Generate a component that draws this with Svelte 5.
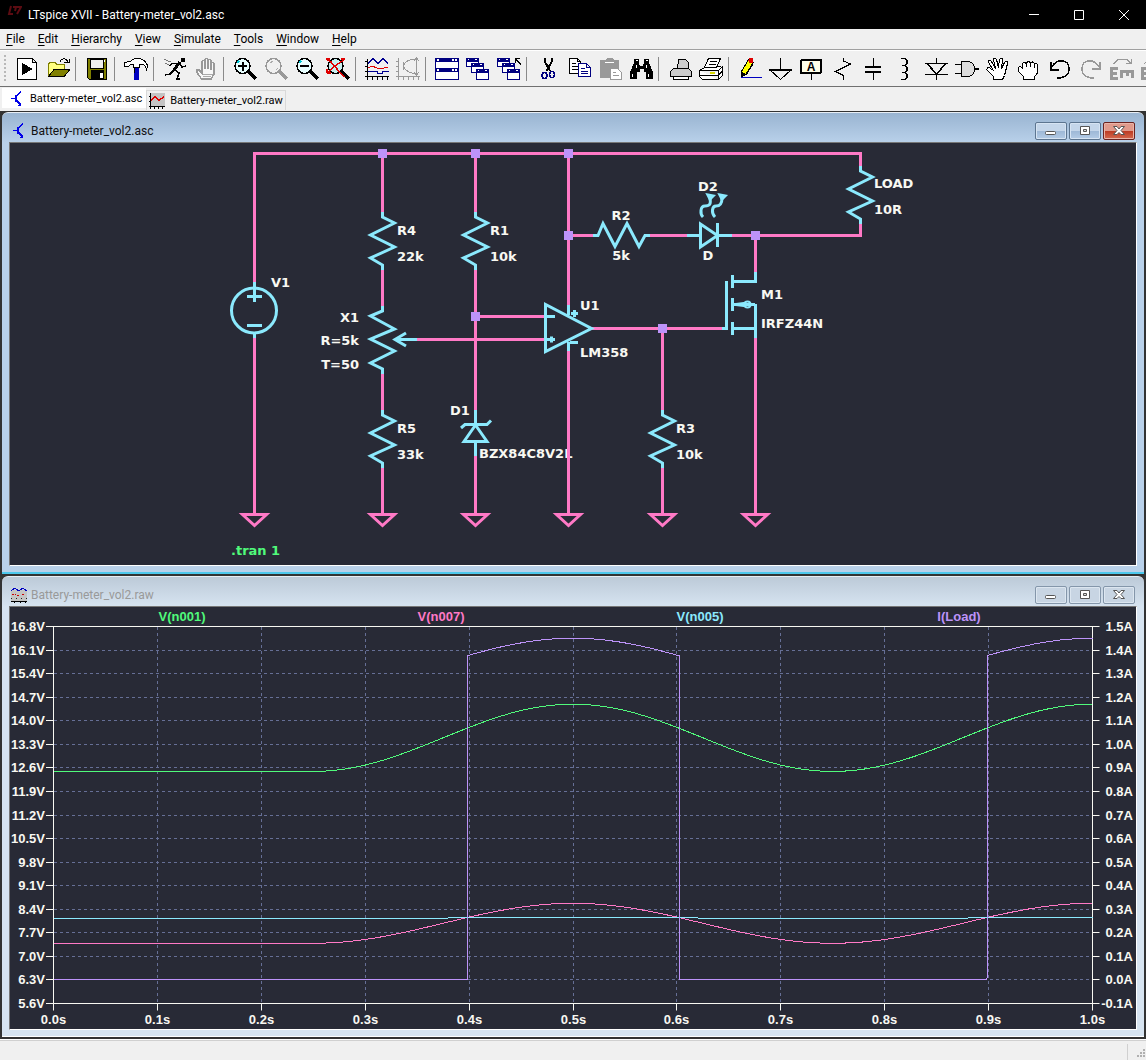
<script>
  const menus = ['File', 'Edit', 'Hierarchy', 'View', 'Simulate', 'Tools', 'Window', 'Help'];

  const toolGroups = [
    ['Run', 'Open'],
    ['Save'],
    ['Control Panel'],
    ['Simulate', 'Halt'],
    ['Zoom in', 'Pan', 'Zoom out', 'Zoom full'],
    ['Autorange', 'FFT'],
    ['Tile', 'Cascade', 'Close all'],
    ['Cut', 'Copy', 'Paste', 'Find'],
    ['Print setup', 'Print'],
    ['Wire', 'Ground', 'Label net', 'Resistor', 'Capacitor', 'Inductor', 'Diode', 'Component', 'Move', 'Drag', 'Undo', 'Redo', 'Rotate', 'Mirror']
  ];

  const resistors = [[382.5, 212], [475.5, 212], [382.5, 410], [662.5, 410], [860.5, 166]];
  const grounds = [254.5, 382.5, 475.5, 568.5, 662.5, 755.5];
  const nodes = [[382.5, 153.5], [475.5, 153.5], [568.5, 153.5], [568.5, 235.5], [755.5, 235.5], [475.5, 316.5], [662.5, 328.5]];
  const labels = [
    ['V1', 271, 287], ['R4', 397, 235], ['22k', 397, 261], ['R1', 490, 235], ['10k', 490, 261],
    ['R5', 397, 433], ['33k', 397, 459], ['D1', 450, 415], ['BZX84C8V2L', 479, 458],
    ['U1', 580, 310], ['LM358', 580, 357], ['M1', 761, 299], ['IRFZ44N', 761, 328],
    ['R3', 676, 433], ['10k', 676, 459], ['LOAD', 874, 188], ['10R', 874, 214],
    ['X1', 359, 322, 'end'], ['R=5k', 359, 345, 'end'], ['T=50', 359, 369, 'end'],
    ['R2', 621, 220, 'middle'], ['5k', 621, 260, 'middle'], ['D2', 708, 191, 'middle'], ['D', 708, 260, 'middle']
  ];

  const left = 53.5, right = 1092.5, top = 626.5, bottom = 1003.5;
  const rowY = (i) => Math.floor(top + (i * (bottom - top)) / 16) + 0.5;
  const colX = (t) => left + t * (right - left);
  const rows = Array.from({ length: 17 }, (_, i) => ({
    y: rowY(i),
    volts: (16.8 - 0.7 * i).toFixed(1) + 'V',
    amps: ((15 - i) / 10).toFixed(1) + 'A'
  }));
  const cols = Array.from({ length: 11 }, (_, i) => ({ x: Math.floor(colX(i / 10)) + 0.5, label: (i / 10).toFixed(1) + 's' }));

  function wave(mid, amp, from = 0, to = 1) {
    const pts = [];
    for (let i = 0; i <= 100; i++) {
      const t = from + ((to - from) * i) / 100;
      const c = t < 0.25 ? 1 : Math.cos((t - 0.25) * 4 * Math.PI);
      pts.push(colX(t).toFixed(1) + ',' + (mid + amp * c).toFixed(1));
    }
    return pts.join(' ');
  }
  const traces = [
    { name: 'V(n001)', x: 182, tone: 'green', points: wave(737.8, 33.7) },
    { name: 'V(n007)', x: 441, tone: 'pink', points: wave(923.3, 20) },
    { name: 'V(n005)', x: 700, tone: 'cyan', points: wave(918, 0.5) },
    {
      name: 'I(Load)', x: 959, tone: 'purple',
      points: `53.5,979.5 467.5,979.5 467.5,655.5 ${wave(662.8, 24.6, 0.4, 0.602)} 679.5,655.5 679.5,979.5 986.5,979.5 987.5,976 987.5,655.5 ${wave(662.8, 24.6, 0.9, 1)}`
    }
  ];
</script>

{#snippet transistor()}
  <svg class="small" viewBox="0 0 16 16" aria-hidden="true">
    <path d="M2 7.500h5M7 4v7M7 5.500L12 1M7 9l5 5" fill="none" stroke="#0000e8" stroke-width="1.500" />
    <path d="M12 11v4H8z" fill="#0000e8" />
  </svg>
{/snippet}

{#snippet glass(color, fill)}
  <path d="M15 14L23 22" stroke={color} stroke-width="3" />
  <circle cx="9.500" cy="9" r="7.500" fill={fill} stroke={color} stroke-width="1.500" />
{/snippet}

{#snippet windows()}
  <g fill="#fff" stroke="#000080">
    <path d="M.5 1.500h12v8H.5z" />
    <path d="M1 3h11" stroke-width="4" />
    <path d="M5.500 6.500h12v9h-12z" />
    <path d="M6 8h11" stroke-width="4" />
    <path d="M10.500 12.500h12v10h-12z" />
    <path d="M11 14h11" stroke-width="4" />
  </g>
  <path d="M2 2.500h1M9 2.500h2M7 7.500h1M14 7.500h2M12 13.500h1M19 13.500h2" stroke="#fff" />
{/snippet}

{#snippet icon(name)}
  <svg class="icon" viewBox="0 0 24 24" fill="none" stroke="#000" aria-hidden="true">
    {#if name === 'Run'}
      <path d="M2.500 1.500h15l4 4v17h-19zM17.500 1.500v4h4" fill="#fff" />
      <path d="M7 6v12l11-6z" fill="#000" stroke="none" />
    {:else if name === 'Open'}
      <path d="M2.500 19.500V7l2-2h4l2 2h8v6" fill="#ffff80" stroke="#808000" />
      <path d="M2.500 19.500L8 12.500h16l-6 7z" fill="#808000" />
      <path d="M14 4.500c2-4 6-4 8 1M18 5.500h5v-4" />
    {:else if name === 'Save'}
      <path d="M2.500 1.500h19v21h-17l-2-2z" fill="#808000" />
      <path d="M5.500 2h13v9h-13z" fill="#f0f0f0" />
      <path d="M6 13h13v9H6z" fill="#000" stroke="none" />
      <path d="M15 16h3v5h-3zM19 3h1v2h-1z" fill="#fff" stroke="none" />
    {:else if name === 'Control Panel'}
      <path d="M10 10h5v13h-5z" fill="#0000c0" stroke="none" />
      <path d="M10.500 10v6" />
      <path d="M.5 5.500v4h4l2-2h3v3h6v-3c4-1 6 1 7 5c2-4 0-8-4-10c-3-1.500-7-1.500-10 0l-2 2z" fill="#fff" />
    {:else if name === 'Simulate'}
      <path d="M18 1h4v4h-4z" fill="#000" stroke="none" />
      <path d="M17 5l-6 8" stroke-width="3" />
      <path d="M17 7l2 3 4-1M15 6.500H9L7 9M12 13l4 3-2 6h3M11 13l-4 4-5 1" stroke-width="1.500" />
      <path d="M1 2l4 2 3 0M2 6l4 2" stroke="#777" />
    {:else if name === 'Halt'}
      <path d="M7.500 22L3 15.500V13h2l3 3V5c0-2 3-2 3 0v7V3c0-2 3-2 3 0v9V4c0-2 3-2 3 0v9V7c0-2 3-2 3 0v10l-3 5z" fill="#f8f8f8" stroke="#999" stroke-width="1.500" />
      <path d="M9 17h10M9 19h8" stroke="#aaa" />
    {:else if name === 'Zoom in'}
      {@render glass('#000', '#e8ffff')}
      <path d="M5 9h9M9.500 4.500v9" stroke-width="2" />
      <path d="M4 6l2-2" stroke="#00c8d8" stroke-width="2" />
    {:else if name === 'Pan'}
      {@render glass('#999', '#f0f0f0')}
      <path d="M6 6l3-2M12 13l2-2" stroke="#aaa" />
    {:else if name === 'Zoom out'}
      {@render glass('#000', '#e8ffff')}
      <path d="M5 9h9" stroke-width="2" />
      <path d="M4 6l2-2" stroke="#00c8d8" stroke-width="2" />
    {:else if name === 'Zoom full'}
      {@render glass('#000', '#c8f0f0')}
      <path d="M0 2l5 3 13 15M19 2L9 9 1 16M1 16v-4M1 16h4M0 2h4M19 2l-4 0" stroke="#e00000" stroke-width="1.500" />
    {:else if name === 'Autorange'}
      <path d="M2.500 2v21M0 19.500h24M0 4.500h2M0 9.500h2M0 14.500h2M7.500 20v3M12.500 20v3M17.500 20v3M22.500 20v3" />
      <path d="M3 6.500l5-5 5 5 5-5 5 5M3 14.500h9v2h5v-2h7" stroke="#000090" />
      <path d="M3 11l4-2 6 2.500h4l6-1.500" stroke="#e00000" />
    {:else if name === 'FFT'}
      <path d="M2.500 1v22M0 19.500h24M0 4.500h2M0 9.500h2M0 14.500h2M7.500 20v3M12.500 20v3M17.500 20v3M22.500 20v3M7 9c3-6 7-6.500 13-6.500M7 9c3 6 7 7.500 13 7.500M20.500 1v18M7.500 5v8M18 4l2.500-3 2.500 3M18 15l2.500 3 2.500-3" stroke="#999" />
    {:else if name === 'Tile'}
      <path d="M.5 1.500h23v21H.5z" fill="#fff" stroke="#000080" />
      <path d="M0 3h24M0 13h24" stroke="#000080" stroke-width="4" />
      <path d="M2 3h2M17 3h2M20 3h2M2 13h2M17 13h2M20 13h2" stroke="#fff" stroke-width="2" />
    {:else if name === 'Cascade'}
      {@render windows()}
    {:else if name === 'Close all'}
      {@render windows()}
      <path d="M18.500 6V1.500H23M18.500 1.500l5.500 6" stroke-width="1.500" />
    {:else if name === 'Cut'}
      <path d="M9 1v4l5 9M15.500 1v4l-5 9" stroke-width="2" />
      <ellipse cx="8.500" cy="18.500" rx="2.500" ry="3" stroke="#000080" stroke-width="1.500" />
      <ellipse cx="16" cy="17.500" rx="2.500" ry="3" stroke="#000080" stroke-width="1.500" />
    {:else if name === 'Copy'}
      <path d="M2.500 1.500h8l3 3v12h-11zM10.500 1.500v3h3M5 6.500h4M5 9.500h6M5 12.500h6" fill="#fff" />
      <path d="M11.500 6.500h8l4 4v9h-12zM19.500 6.500v4h4M14 11.500h4M14 14.500h7M14 16.500h7" fill="#fff" stroke="#000080" />
    {:else if name === 'Paste'}
      <path d="M2 3h5l2-2h5l2 2h5v18H2z" fill="#999" stroke="none" />
      <path d="M7 5.500h9" stroke="#fff" />
      <path d="M12.500 11.500h7l4 4v7h-11zM15 15.500h3M15 18.500h6" fill="#fff" stroke="#999" />
    {:else if name === 'Find'}
      <path d="M5 2h5v4l1 3h3l1-3V2h5v4l4 9v7h-7v-7h-2v-3h-4v3H8v7H1v-7l4-9z" fill="#000" stroke="none" />
      <path d="M7 3.500h2M17 3.500h2M7.500 8v3M17.500 8v3M3.500 17v3M19.500 17v3" stroke="#fff" />
    {:else if name === 'Print setup'}
      <path d="M10.500 2.500h7l3 3v7h-11z" fill="#ccc" />
      <path d="M5.500 11.500h15l3 3v5h-21v-5z" fill="#ccc" />
      <path d="M5.500 19.500v3h15v-3z" fill="#fff" />
    {:else if name === 'Print'}
      <path d="M5.500 10.500L.5 13.500v6l3 3h16l4-4v-8l-3-1zM.5 13.500h19v9M19.500 13.500l4-4M1 18.500h18l4-4" fill="#fff" />
      <path d="M9.500 1.500h12l-4 9h-12zM11 4.500h7M10 7.500h7" fill="#fff" />
      <path d="M11 16h5" stroke="#d8d800" stroke-width="2" />
    {:else if name === 'Wire'}
      <path d="M3 20.500h21" stroke="#0000c0" />
      <path d="M3.500 19.500v-5l7-12 5 3-7 12z" fill="#ffff00" />
      <path d="M3 20v-5l4 2z" fill="#000" />
      <circle cx="13" cy="3.500" r="2.500" fill="#e00000" stroke="none" />
      <path d="M8 17.500l7-11" stroke-width="1.500" />
    {:else if name === 'Ground'}
      <path d="M11.500 1v11M.5 12.500h22L11.500 22.500z" />
      <path d="M0 13h23" stroke-width="2" />
    {:else if name === 'Label net'}
      <rect x="1" y="3" width="20" height="13" rx="1" fill="#ffffe8" stroke-width="2" />
      <text class="glyph" x="11" y="14" text-anchor="middle">A</text>
      <path d="M11.500 16v7" />
    {:else if name === 'Resistor'}
      <path d="M12.500 1v3l7 3-15 7.500 8 4v4.500" />
    {:else if name === 'Capacitor'}
      <path d="M11.500 1v9M11.500 15v8" />
      <path d="M3 10h16M3 15h16" stroke-width="2" />
    {:else if name === 'Inductor'}
      <path d="M8 1.500h3c4 0 4 7 0 7H9h2c4 0 4 7 0 7H9h2c4 0 4 7 0 7H8" stroke-width="1.500" />
    {:else if name === 'Diode'}
      <path d="M12.500 1v5M12.500 17v6M1 6.500h23M3 6.500l9.500 10.500L22 6.500M1 17.500h23" stroke-width="1.500" />
    {:else if name === 'Component'}
      <path d="M6 4.500h7c9 1 9 14 0 15H6z" fill="#ddd" />
      <path d="M0 7.500h6M0 16.500h6M20 12h4" stroke-width="1.500" />
    {:else if name === 'Move'}
      <path d="M7.500 22.500v-3l-6-6c-2-2 1-4 3-2l3 2-5-8c-1-3 2-3 3-1l4 7-2-9c0-2 2-2 3 0l2 8 1-8c1-2 3-2 3 0l-1 9 3-6c1-2 4-1 3 1l-3 12-2 4z" fill="#fff" />
    {:else if name === 'Drag'}
      <path d="M6.500 22.500v-3l-5-5v-4c1-2 3-1 4 1V7c1-2 3-2 4 0c0-3 3-3 4-1c1-2 3-1 4 1c2-1 3 0 3 2v7l-3 4v2.500z" fill="#fff" />
      <path d="M9.500 6v4M13.500 6v4M17.500 7v4" />
    {:else if name === 'Undo'}
      <path d="M4 10c4-8 17-9 17 2c0 7-6 9-12 9M3 5v8h8" stroke-width="1.500" />
    {:else if name === 'Redo'}
      <path d="M20 10C16 2 3 1 3 12c0 7 6 9 12 9M21 5v7h-8" stroke="#999" stroke-width="1.500" />
    {:else if name === 'Rotate'}
      <path d="M3.500 7l5-5h8l4 4M16 6.500h5V2" stroke="#999" />
      <path d="M8 11.500H1.500v10H8M2 16.500h5M10 14.500h14M11.500 15v6M17 15v4M22.500 15v6" stroke="#999" stroke-width="3" />
    {:else if name === 'Mirror'}
      <path d="M3 7l5-5" stroke="#999" />
      <path d="M8 11.500H1.500v10H8M2 16.500h5" stroke="#999" stroke-width="3" />
    {/if}
  </svg>
{/snippet}

{#snippet frameButtons()}
  <div class="frame-buttons">
    <button aria-label="Minimize"><svg viewBox="0 0 14 12"><rect x="1.500" y="6.500" width="10" height="3" rx="1" fill="#fff" stroke="#555" /></svg></button>
    <button aria-label="Restore"><svg viewBox="0 0 14 12"><path d="M2.500 1.500h9v8h-9z" fill="#fff" stroke="#555" /><path d="M5.500 4.500h3v2h-3z" fill="#ddd" stroke="#555" /></svg></button>
    <button class="close" aria-label="Close"><svg viewBox="0 0 14 12"><path d="M1.500 1.500h3.500l2 2.500 2-2.500h3.500L9 5.500l3.500 4H9L7 7.500 5 9.500H1.500L5 5.500z" fill="#fff" stroke="#555" /></svg></button>
  </div>
{/snippet}

<div class="app">
  <header class="titlebar">
    <svg class="logo" viewBox="0 0 16 16" aria-hidden="true"><path d="M5 3L3 11h4M7 4h8l-4 7M10 4L9 8" fill="none" stroke="#5c0c12" stroke-width="2" /></svg>
    <h1>LTspice XVII - Battery-meter_vol2.asc</h1>
    <div class="system">
      <button aria-label="Minimize"><svg viewBox="0 0 12 12"><path d="M1 5.500h10" /></svg></button>
      <button aria-label="Maximize"><svg viewBox="0 0 12 12"><path d="M1.500 1.500h9v9h-9z" /></svg></button>
      <button aria-label="Close"><svg viewBox="0 0 12 12"><path d="M1 1l10 10M11 1L1 11" /></svg></button>
    </div>
  </header>

  <nav class="menu">
    {#each menus as item}
      <button><u>{item[0]}</u>{item.slice(1)}</button>
    {/each}
  </nav>

  <div class="toolbar" role="toolbar" aria-label="Main">
    <span class="grip"></span>
    {#each toolGroups as group}
      <div class="group">
        {#each group as name}
          <button aria-label={name}>{@render icon(name)}</button>
        {/each}
      </div>
    {/each}
  </div>

  <div class="tabs" role="tablist">
    <button class="tab active" role="tab" aria-selected="true">{@render transistor()}Battery-meter_vol2.asc</button>
    <button class="tab" role="tab" aria-selected="false">
      <svg class="small" viewBox="0 0 16 16" aria-hidden="true">
        <path d="M1 0h15v14H1z" fill="#c4c4c4" />
        <path d="M1.500 0v16M0 13.500h16M0 3.500h2M0 8.500h2M5.500 14v2M9.500 14v2M13.500 14v2" stroke="#000" fill="none" />
        <path d="M2 7l4-3 4 3 5-3" stroke="#e00000" stroke-width="1.500" fill="none" />
      </svg>Battery-meter_vol2.raw</button>
  </div>

  <main class="desktop">
    <section class="child front">
      <div class="caption">{@render transistor()}<h2>Battery-meter_vol2.asc</h2>{@render frameButtons()}</div>
      <svg class="client" viewBox="10 143 1126 422" role="img" aria-label="Schematic">
        <g class="names">
          {#each labels as [text, x, y, anchor]}
            <text {x} {y} text-anchor={anchor ?? 'start'}>{text}</text>
          {/each}
          <text class="directive" x="231" y="555">.tran 1</text>
        </g>
        <g class="wires">
          <path d="M254.500 282V153.500H860.500V166M860.500 223V235.500H732M687 235.500H650M593 235.500H568.500" />
          <path d="M254.500 338V514M382.500 153V212M382.500 270V306M382.500 374V410M382.500 468V514" />
          <path d="M475.500 153V212M475.500 270V410M475.500 456V514M475.500 316.500H546M417 339.500H546" />
          <path d="M568.500 153V305M568.500 350V514M592 328.500H722M662.500 328V410M662.500 468V514" />
          <path d="M755.500 235V272M755.500 338V514" />
          {#each grounds as x}
            <path d="M{x - 12} 514.500h24l-12 11z" />
          {/each}
        </g>
        <g class="parts">
          {#each resistors as [x, y]}
            <path d="M{x} {y}v5l12 6-24 12 24 12-24 11 12 7v5" />
          {/each}
          <path d="M382.500 306v5l-12 5 24 13-24 10 24 12-24 12 12 6v5" />
          <path d="M417 339.500H395M406 333l-11 6.500 11 6.500" />
          <path d="M593 235.500h5l5-12 12 23 12-23 12 23 6-11h5" />
          <circle cx="254" cy="310.500" r="22.500" />
          <path d="M254.500 282v20M247 296.500h15M247 325.500h15M254.500 333v5" />
          <path d="M475.500 410v14M461 428l4-3.500h22l4-4M475.500 425l-11.500 16.500h23zM475.500 441v15" />
          <path d="M545.500 304.500v47l46-23zM568.500 305v10M568.500 342v9M547 316.500h8M547 339.500h8M551.500 336.500v6M571 313.500h7M574.500 310v7M570 342.500h8" />
          <path d="M687 235.500h13M700.500 224v23l17-11.500zM717.500 223v24M717 235.500h15" />
          <path d="M703 217c-3-3-3-11 2-11s6-2 5-8M715 217c-4-4-3-11 1-11s6-2 6-8" />
          <path class="solid" d="M708 195l5 1-3 3zM720 195l5 1-3 3z" />
          <path d="M722 328.500h4.500V281M755.500 272v9.500H732M732.500 275v13M732.500 298v13M732.500 322v13M732 328.500h23M755.500 304V338" />
          <path d="M733 304.500h22M736 304.500l8-1v2z" />
          <ellipse class="thin" cx="747.500" cy="304.500" rx="3" ry="3" />
        </g>
        <g class="nodes">
          {#each nodes as [x, y]}
            <rect x={x - 4.5} y={y - 4.5} width="9" height="9" />
          {/each}
        </g>
      </svg>
    </section>

    <section class="child">
      <div class="caption">
        <svg class="small" viewBox="0 0 16 16" aria-hidden="true">
          <path d="M0 3h16v11H0z" fill="#c4c4c4" />
          <path d="M0 4l4-3 4 3 4-3 4 3" stroke="#0000c0" fill="none" />
          <path d="M1 7.500h4M6 8.500h3M11 7.500h2" stroke="#c00" stroke-dasharray="2 1" />
          <path d="M0 11.500h16" stroke="#222" stroke-dasharray="1 4" /><path d="M0 14.500h16M3 15v1M9 15v1M14 15v1" stroke="#000" />
        </svg><h2>Battery-meter_vol2.raw</h2>{@render frameButtons()}
      </div>
      <svg class="client plot" viewBox="10 607 1126 422" role="img" aria-label="Waveforms">
        <g class="grid">
          {#each rows.slice(1, -1) as row}
            <path d="M{left} {row.y}H{right}" />
          {/each}
          {#each cols.slice(1, -1) as col}
            <path d="M{col.x} {top}V{bottom}" />
          {/each}
        </g>
        <g class="axes">
          <rect x={left} y={top} width={right - left} height={bottom - top} />
          {#each rows as row}
            <path d="M46 {row.y}H{left}M{right} {row.y}h7" />
          {/each}
          {#each cols as col}
            <path d="M{col.x} {bottom}v7" />
          {/each}
        </g>
        <g class="scale">
          {#each rows as row}
            <text x="45" y={row.y + 4.5} text-anchor="end">{row.volts}</text>
            <text x="1133" y={row.y + 4.5} text-anchor="end">{row.amps}</text>
          {/each}
          {#each cols as col}
            <text x={col.x} y="1024" text-anchor="middle">{col.label}</text>
          {/each}
        </g>
        {#each traces as trace}
          <g class={trace.tone}>
            <polyline points={trace.points} />
            <text x={trace.x} y="621" text-anchor="middle">{trace.name}</text>
          </g>
        {/each}
      </svg>
    </section>
  </main>

  <footer class="status">
    <span class="cell"></span>
    <svg class="sizer" viewBox="0 0 12 12" aria-hidden="true"><path d="M9 1h2v2H9zM6 4h2v2H6zM9 4h2v2H9zM3 7h2v2H3zM6 7h2v2H6zM9 7h2v2H9z" fill="#b0b0b0" /></svg>
  </footer>
</div>

<style>
  :global(body) {
    background: #f0f0f0;
  }
  .app {
    display: flex;
    flex-direction: column;
    min-height: 100vh;
    overflow: hidden;
    font: 12px/16px Roboto, 'Open Sans', sans-serif;
    color: #000;
  }
  button {
    font: inherit;
    color: inherit;
    background: none;
    border: 0;
    padding: 0;
    margin: 0;
  }
  h1,
  h2 {
    margin: 0;
    font: inherit;
    white-space: nowrap;
  }
  svg {
    display: block;
    flex: none;
  }
  .titlebar {
    display: flex;
    align-items: center;
    height: 29px;
    background: #000;
    color: #fff;
  }
  .logo {
    width: 16px;
    height: 16px;
    margin: 0 6px 8px;
  }
  .system {
    display: flex;
    margin-left: auto;
  }
  .system button {
    display: flex;
    align-items: center;
    justify-content: center;
    width: 45px;
    height: 26px;
  }
  .system svg {
    width: 12px;
    height: 12px;
    fill: none;
    stroke: #fff;
  }
  .menu {
    display: flex;
    height: 20px;
    background: #f0f0f0;
    border-bottom: 1px solid #a0a0a0;
  }
  .menu button {
    padding: 0 7px 0 6px;
  }
  .menu u {
    text-underline-offset: 2px;
  }
  .toolbar {
    display: flex;
    align-items: center;
    height: 35px;
    border-top: 1px solid #fff;
    border-bottom: 1px solid #707070;
    overflow: hidden;
  }
  .grip {
    flex: none;
    height: 27px;
    width: 2px;
    margin: 0 5px 0 4px;
    background: repeating-linear-gradient(#b8b8b8 0 2px, #f0f0f0 2px 4px);
  }
  .group {
    display: flex;
    flex: none;
  }
  .group + .group {
    margin-left: 2px;
    padding-left: 5px;
    border-left: 1px solid #8a8a8a;
  }
  .group button {
    flex: none;
    padding: 0 3px 0 4px;
  }
  .icon {
    width: 24px;
    height: 24px;
    shape-rendering: crispEdges;
  }
  .glyph {
    font: bold 12px 'Liberation Sans', sans-serif;
    fill: #000;
    stroke: none;
  }
  .tabs {
    display: flex;
    align-items: flex-start;
    height: 23px;
    padding: 1px 2px 0;
    font-size: 11px;
  }
  .tab {
    display: flex;
    align-items: center;
    gap: 5px;
    height: 20px;
    margin-top: 2px;
    padding: 0 2px;
    border: 1px solid #d9d9d9;
    border-bottom: 0;
    white-space: nowrap;
  }
  .tab.active {
    margin-top: 0;
    padding: 0 3px 0 6px;
    background: #fff;
    border-color: #fff;
  }
  .small {
    width: 16px;
    height: 16px;
    shape-rendering: crispEdges;
  }
  .desktop {
    display: flex;
    flex-direction: column;
    gap: 2px;
    padding: 1px 2px 2px;
    background: #333;
  }
  .child {
    padding: 0 7px 6px;
    background: linear-gradient(#bccad8, #d7e4f1 30px);
    border-top: 1px solid #e8eef5;
    border-bottom: 1px solid #fff;
    border-radius: 6px 6px 0 0;
  }
  .front {
    background: linear-gradient(#99b4d1, #b9d1ea 30px);
    border-bottom: 2px solid #4cc8ec;
  }
  .caption {
    display: flex;
    align-items: center;
    gap: 4px;
    height: 29px;
    padding: 6px 2px 0;
    box-sizing: border-box;
    color: #999;
  }
  .front .caption {
    color: #111;
  }
  .frame-buttons {
    display: flex;
    gap: 2px;
    margin-left: auto;
  }
  .frame-buttons button {
    display: flex;
    align-items: center;
    justify-content: center;
    width: 32px;
    height: 18px;
    border: 1px solid #8496aa;
    border-radius: 2px;
    background: #c8d5e3;
    box-shadow: inset 0 0 0 1px #dce6f0;
  }
  .frame-buttons svg {
    width: 14px;
    height: 12px;
  }
  .front .frame-buttons button {
    border-color: #5c7590;
    background: linear-gradient(#c4d6ea 50%, #9db8d6 50%, #b4cce6);
    box-shadow: inset 0 0 0 1px #d6e4f3;
  }
  .front .frame-buttons .close {
    border-color: #6b2320;
    background: linear-gradient(#e09a8c 50%, #bc3a22 50%, #d46a50);
    box-shadow: inset 0 0 0 1px #eab4a8;
  }
  .client {
    box-sizing: border-box;
    width: 100%;
    background: #282a36;
    border: 1px solid #777;
    border-right-color: #fff;
    border-bottom-color: #fff;
  }
  .names {
    font: bold 13px 'DejaVu Sans', sans-serif;
    fill: #f8f8f2;
  }
  .directive {
    fill: #50fa7b;
  }
  .wires,
  .parts {
    fill: none;
    stroke-width: 3;
  }
  .wires {
    stroke: #ff79c6;
  }
  .parts {
    stroke: #8be9fd;
  }
  .thin {
    stroke-width: 2;
  }
  .solid {
    fill: #8be9fd;
  }
  .nodes {
    fill: #bd93f9;
  }
  .plot {
    font: bold 13px 'Liberation Sans', sans-serif;
  }
  .grid {
    stroke: #666f96;
    stroke-dasharray: 3 3;
    shape-rendering: crispEdges;
  }
  .axes {
    fill: none;
    stroke: #f8f8f2;
  }
  .scale {
    fill: #f8f8f2;
  }
  polyline {
    fill: none;
    stroke: currentColor;
    shape-rendering: crispEdges;
  }
  .green,
  .pink,
  .cyan,
  .purple {
    fill: currentColor;
  }
  .green {
    color: #50fa7b;
  }
  .pink {
    color: #ff79c6;
  }
  .cyan {
    color: #8be9fd;
  }
  .purple {
    color: #bd93f9;
  }
  .status {
    display: flex;
    flex: 1;
    align-items: flex-end;
    min-height: 18px;
    background: #f0f0f0;
    border-top: 1px solid #fff;
    box-shadow: inset 0 1px #d0d0d0;
  }
  .cell {
    flex: 1;
    height: 16px;
    border-right: 1px solid #d0d0d0;
  }
  .sizer {
    width: 12px;
    height: 12px;
    margin-left: 6px;
  }
</style>
